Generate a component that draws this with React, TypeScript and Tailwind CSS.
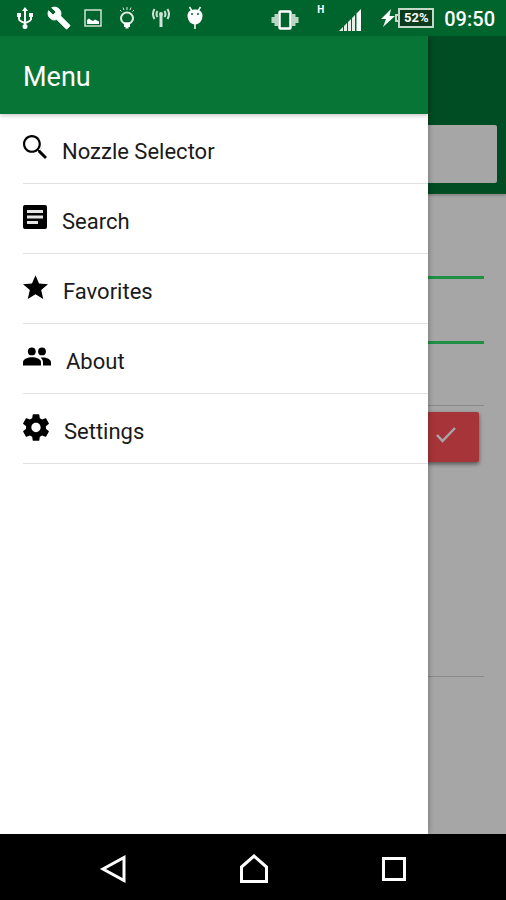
// App.tsx
import React, { useState } from 'react';

interface MenuItem {
  label: string;
  icon: React.ReactNode;
}

const menuItems: MenuItem[] = [
  {
    label: 'Nozzle Selector',
    icon: (
      <svg width="24" height="24" viewBox="3 3 17.5 17.5" fill="currentColor">
        <path d="M15.5 14h-.79l-.28-.27C15.41 12.59 16 11.11 16 9.5 16 5.91 13.09 3 9.5 3S3 5.91 3 9.5 5.91 16 9.5 16c1.61 0 3.09-.59 4.23-1.57l.27.28v.79l5 4.99L20.49 19l-4.99-5zm-6 .4C6.8 14.4 4.6 12.2 4.6 9.5S6.8 4.6 9.5 4.6s4.9 2.2 4.9 4.9-2.2 4.9-4.9 4.9z" />
      </svg>
    ),
  },
  {
    label: 'Search',
    icon: (
      <svg width="24" height="24" viewBox="0 0 24 24">
        <rect width="24" height="24" rx="2" fill="currentColor" />
        <path d="M4 5h16v3H4zM4 10.500h16v3H4zM4 16h11v3H4z" fill="#e4e4e4" />
      </svg>
    ),
  },
  {
    label: 'Favorites',
    icon: (
      <svg width="25" height="24" viewBox="2 2 20 19" fill="currentColor">
        <path d="M12 17.27L18.18 21l-1.64-7.03L22 9.24l-7.19-.61L12 2 9.19 8.63 2 9.24l5.46 4.73L5.82 21z" />
      </svg>
    ),
  },
  {
    label: 'About',
    icon: (
      <svg width="28" height="20" viewBox="0 0 28 20" fill="currentColor">
        <circle cx="8.8" cy="4.4" r="3.9" />
        <circle cx="19" cy="4.4" r="3.9" />
        <path d="M0 18.5v-3.2c0-3.3 5-5 9-5s9 1.7 9 5v3.2z" />
        <path d="M20 18.5v-3.2c0-1.8-.9-3.3-2.4-4.6 5-.6 10.4 1.200 10.4 4.6v3.2z" />
      </svg>
    ),
  },
  {
    label: 'Settings',
    icon: (
      <svg width="26" height="27" viewBox="2.2 2 19.6 20" fill="currentColor">
        <path d="M19.43 12.98c.04-.32.07-.64.07-.98s-.03-.66-.07-.98l2.11-1.65c.19-.15.24-.42.12-.64l-2-3.46c-.12-.22-.39-.3-.61-.22l-2.49 1c-.52-.4-1.08-.73-1.69-.98l-.38-2.65C14.46 2.18 14.25 2 14 2h-4c-.25 0-.46.18-.49.42l-.38 2.65c-.61.25-1.17.59-1.69.98l-2.49-1c-.23-.09-.49 0-.61.22l-2 3.46c-.13.22-.07.49.12.64l2.11 1.65c-.04.32-.07.65-.07.98s.03.66.07.98l-2.11 1.65c-.19.15-.24.42-.12.64l2 3.46c.12.22.39.3.61.22l2.49-1c.52.4 1.08.73 1.69.98l.38 2.65c.03.24.24.42.49.42h4c.25 0 .46-.18.49-.42l.38-2.65c.61-.25 1.17-.59 1.69-.98l2.49 1c.23.09.49 0 .61-.22l2-3.46c.12-.22.07-.49-.12-.64l-2.11-1.65zM12 15.5c-1.93 0-3.5-1.57-3.5-3.5s1.57-3.5 3.5-3.5 3.5 1.57 3.5 3.5-1.57 3.5-3.5 3.5z" />
      </svg>
    ),
  },
];

const notificationIcons: React.ReactNode[] = [
  // usb
  <svg width="18" height="22" viewBox="0 0 18 22" fill="none" stroke="currentColor" strokeWidth="2">
    <path d="M9 2v17M3 8v4q0 2 6 4M15 8v4q0 2-6 4" />
    <path d="M9 0l3 4H6zM1 6h4v4H1zM13 6h4v4h-4z" fill="currentColor" stroke="none" />
    <circle cx="9" cy="19.5" r="2.5" fill="currentColor" stroke="none" />
  </svg>,
  // wrench
  <svg width="24" height="24" viewBox="0 0 24 24" fill="currentColor">
    <path d="M22.7 19l-9.1-9.1c.9-2.3.4-5-1.5-6.9-2-2-5-2.4-7.4-1.300L9 6 6 9 1.6 4.7C.4 7.1.9 10.1 2.9 12.1c1.9 1.9 4.6 2.4 6.9 1.5l9.1 9.1c.4.4 1 .4 1.4 0l2.3-2.3c.5-.4.5-1.1.1-1.4z" stroke="currentColor" strokeWidth="0.8" />
  </svg>,
  // picture
  <svg width="18" height="18" viewBox="0 0 18 18" fill="none">
    <rect x="1" y="1" width="16" height="16" stroke="#cfe3d5" strokeWidth="1.5" />
    <path d="M3 15v-4l2-1.500 2 1.500 2 1 2-1.500 4 2V15z" fill="currentColor" />
  </svg>,
  // bulb
  <svg width="16" height="22" viewBox="0 0 16 22" fill="none" stroke="#dcebe0" strokeWidth="2">
    <path d="M8 0v3M4 .5l1 2.500M12 .5l-1 2.500M1 3l1.500 1.500M15 3l-1.500 1.500" strokeWidth="1" />
    <path d="M5.5 16.500c-2-1.300-3.500-3-3.500-5a6 6 0 0 1 12 0c0 2-1.500 3.700-3.500 5z" />
    <path d="M5 15.500h6V20H9.500v1.500h-3V20H5z" fill="currentColor" stroke="none" />
  </svg>,
  // antenna
  <svg width="18" height="20" viewBox="0 0 18 20" fill="none" stroke="#cfe3d5" strokeWidth="2">
    <path d="M9 7v12" strokeWidth="3" />
    <path d="M5.5 3q-2 3 0 6M12.5 3q2 3 0 6M2.500 1q-3 5 0 10M15.500 1q3 5 0 10" />
    <circle cx="9" cy="6" r="2" fill="#cfe3d5" stroke="none" />
  </svg>,
  // android
  <svg width="18" height="24" viewBox="0 0 18 24" fill="none">
    <path d="M3.500 1l2.500 4M14.500 1L12 5M9 17v6" stroke="currentColor" strokeWidth="1.5" />
    <path d="M1.500 9.5C1.500 5.500 5 3.500 9 3.500s7.500 2 7.500 6c0 5-3.300 9-7.500 9s-7.500-4-7.500-9z" fill="currentColor" />
    <circle cx="6" cy="8" r="1" fill="#00652d" />
    <circle cx="12" cy="8" r="1" fill="#00652d" />
  </svg>,
];

const StatusBar: React.FC = () => (
  <div className="flex h-9 items-center bg-[#00652d] px-2 text-white">
    {notificationIcons.map((icon, index) => (
      <div key={index} className="flex w-[34px] justify-center">
        {icon}
      </div>
    ))}
    <div className="ml-auto flex items-center">
      <svg className="mt-1" width="28" height="20" viewBox="0 0 28 20" fill="none">
        <rect x="8.5" y="1.5" width="11" height="17" rx="1" stroke="currentColor" strokeWidth="2.5" />
        <path d="M3.5 4H7v12H3.500zM21 4h3.500v12H21zM.5 7h3v6h-3zM24.500 7h3v6h-3z" fill="#b9d6c2" />
      </svg>
      <span className="ml-[18px] mb-4 w-[10px] text-[10px] leading-[10px] font-bold">H</span>
      <svg className="ml-3 mt-1" width="22" height="22" viewBox="0 0 22 22" fill="currentColor">
        <path d="M0 22l4-4v4zM5 22v-5l3-3v8zM9 22v-9l3-3v12zM13 22V9l3-3v16z" fill="#e4f0e7" />
        <path d="M17.5 22V4.500L22 0v22z" />
      </svg>
      <svg className="ml-5" width="14" height="18" viewBox="0 0 14 18" fill="currentColor">
        <path d="M10 0L0 10h5l-3 8L14 7H8.500z" />
      </svg>
      <div className="flex items-center">
        <div className="h-2 w-[3px] border-2 border-r-0 border-[#c4d8c8]" />
        <div className="flex h-5 w-9 items-center justify-center border-2 border-[#c4d8c8] bg-[#0b3a1c] text-[13px] leading-4 font-bold">
          52%
        </div>
      </div>
      <span className="ml-[10px] pt-[2px] pr-[3px] text-[20px] leading-6 font-medium">09:50</span>
    </div>
  </div>
);

const SelectorPage: React.FC = () => (
  <div>
    <div className="bg-[#007637] px-[9px] pt-[89px] pb-[11px] shadow-[0_1px_3px_rgba(0,0,0,0.3)]">
      <input type="text" aria-label="Search" className="block h-[58px] w-full rounded-xs bg-white px-4" />
    </div>
    <div className="flex flex-col pl-6 pr-[22px]">
      <input type="text" aria-label="Flow" className="h-[85px] border-b-3 border-[#30dc6c]" />
      <input type="text" aria-label="Pressure" className="h-[65px] border-b-3 border-[#30dc6c]" />
      <div className="h-[62px] border-b border-[#d4d4d4]" />
      <button
        type="button"
        aria-label="Confirm"
        className="mt-[6px] mr-[5px] flex h-[50px] w-[66px] items-center justify-center self-end rounded-xs bg-[#ff5156] pb-1 text-white shadow-[0_2px_4px_rgba(0,0,0,0.5)]"
      >
        <svg width="20" height="16" viewBox="0 0 20 16" fill="none" stroke="currentColor" strokeWidth="2.5">
          <path d="M1 8l5.5 6L19 1" />
        </svg>
      </button>
      <div className="h-[215px] border-b border-[#d4d4d4]" />
    </div>
  </div>
);

const App: React.FC = () => {
  const [open, setOpen] = useState(true);

  return (
    <div className="flex min-h-screen flex-col bg-white font-[Roboto,sans-serif]">
      <StatusBar />

      <main className="relative flex-1 overflow-hidden">
        <SelectorPage />

        {open && (
          <>
            <div className="absolute inset-0 bg-black/35" onClick={() => setOpen(false)} />
            <nav className="absolute inset-y-0 left-0 right-[78px] bg-white shadow-[0_0_6px_rgba(0,0,0,0.35)]">
              <div className="relative flex h-[78px] items-center bg-[#077535] px-[23px] pt-1 shadow-[0_2px_4px_rgba(0,0,0,0.2)]">
                <h1 className="text-[27px] leading-8 font-normal text-white">Menu</h1>
              </div>
              <ul className="pl-[23px]">
                {menuItems.map((item) => (
                  <li key={item.label} className="border-b border-[#e2e2e2]">
                    <a href="#" className="flex h-[69px] items-center gap-[15px] pb-[3px] text-black">
                      {item.icon}
                      <span className="pt-[10px] text-[22px] leading-7 text-[#1a1a1a]">{item.label}</span>
                    </a>
                  </li>
                ))}
              </ul>
            </nav>
          </>
        )}
      </main>

      <div className="flex h-[66px] items-center justify-center gap-[112px] bg-black pt-1 text-white">
        <button type="button" aria-label="Back">
          <svg width="28" height="28" viewBox="0 0 28 28" fill="none" stroke="currentColor" strokeWidth="3">
            <path d="M25 2.5v23L4 14z" />
          </svg>
        </button>
        <button type="button" aria-label="Home">
          <svg width="30" height="30" viewBox="0 0 30 30" fill="none" stroke="currentColor" strokeWidth="3">
            <path d="M2.500 13L15 2l12.500 11v14.500h-25z" />
          </svg>
        </button>
        <button type="button" aria-label="Recent apps">
          <svg width="26" height="26" viewBox="0 0 26 26" fill="none" stroke="currentColor" strokeWidth="3">
            <path d="M2.500 2.500h21v21h-21z" />
          </svg>
        </button>
      </div>
    </div>
  );
};

export default App;
